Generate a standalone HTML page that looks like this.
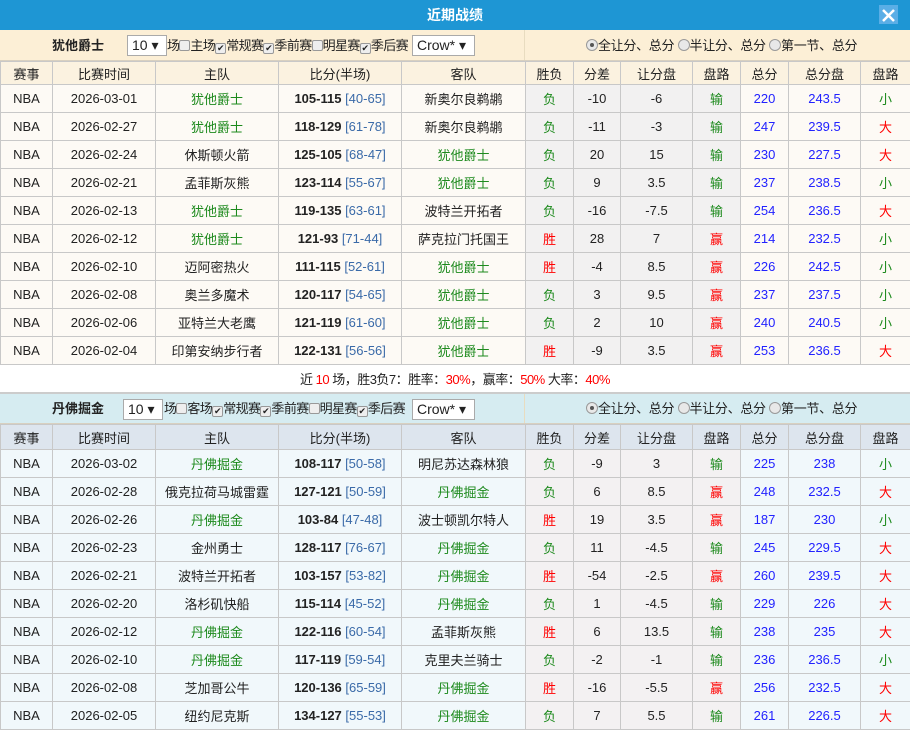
<!DOCTYPE html>
<html><head><meta charset="utf-8"><style>
*{margin:0;padding:0;box-sizing:border-box}
body{width:910px;height:728px;overflow:hidden;background:#fff;font-family:"Liberation Sans","Noto Sans CJK SC",sans-serif;font-size:13px;color:#222}
.title{height:30px;background:#1e96d4;color:#fff;font-weight:bold;font-size:14px;text-align:center;line-height:30px;position:relative}
.close{position:absolute;right:12px;top:5px;width:19px;height:19px;background:#5aaee6}
.bar{height:31px;position:relative;border-bottom:1px solid #d8d0c0;font-size:13px}
.bar .l{position:absolute;left:0;top:0;width:525px;height:100%;border-right:1px solid #e8dcc0}
.bar .team{position:absolute;left:52px;top:0;line-height:31px;font-weight:bold}
.bar .sel{position:absolute;top:5px;height:21px;border:1px solid #aaa;background:#fff;line-height:19px;padding-left:4px;font-size:14px}
.bar .opts{position:absolute;left:167px;top:0;line-height:31px;white-space:nowrap;letter-spacing:-0.6px}
.cb{display:inline-block;width:11px;height:11px;border:1px solid #999;border-radius:2px;background:#eee;vertical-align:-1px;font-size:9px;line-height:9px;text-align:center;letter-spacing:0}
.rd{display:inline-block;width:12px;height:12px;border:1px solid #999;border-radius:50%;background:#e8e8e8;vertical-align:-1px;position:relative}
.rd.on::after{content:"";position:absolute;left:3px;top:3px;width:4px;height:4px;border-radius:50%;background:#555}
.bar .r{position:absolute;left:586px;top:0;line-height:31px;white-space:nowrap;letter-spacing:-0.3px}
table{border-collapse:collapse;table-layout:fixed;width:910px}
td{border:1px solid #c8c8c8;text-align:center;height:28px;white-space:nowrap;overflow:hidden}
tr.h td{height:23px}
.t1 tr.h td{background:#fbf2e0}
.t1 td{background:#fdfaf5}
.t1 td.g{background:#f2f1f1}
.t2 tr.h td{background:#dde5ee;height:25px}
.t2 td{background:#f1f8fb}
.t2 td.g{background:#f3f1f2}
.gr{color:#1d8a1d}.rd2{color:#f00}.bl{color:#22f}.hb{color:#3a6aa8}
b{font-weight:bold}
.sum{height:29px;line-height:29px;text-align:left;padding-left:300px;border-bottom:2px solid #ccc;font-size:13px;letter-spacing:-0.5px}
.sum span{color:#f00}
</style></head><body>
<div class="title">近期战绩<div class="close"><svg width="19" height="19"><path d="M4 4L15 15M15 4L4 15" stroke="#fff" stroke-width="2.5"/></svg></div></div>
<div class="bar" style="background:#fcefd6">
<div class="l"><span class="team">犹他爵士</span><span class="sel" style="left:127px;width:40px">10 ▾</span>
<span class="opts" style="left:167px">场<span class="cb"></span>主场<span class="cb">✔</span>常规赛<span class="cb">✔</span>季前赛<span class="cb"></span>明星赛<span class="cb">✔</span>季后赛</span>
<span class="sel" style="left:412px;width:63px">Crow* ▾</span></div>
<span class="r"><span class="rd on"></span>全让分、总分 <span class="rd"></span>半让分、总分 <span class="rd"></span>第一节、总分</span></div>
<table class="t1"><colgroup><col style="width:52px"><col style="width:103px"><col style="width:123px"><col style="width:123px"><col style="width:124px"><col style="width:48px"><col style="width:47px"><col style="width:72px"><col style="width:48px"><col style="width:48px"><col style="width:72px"><col style="width:50px"></colgroup>
<tr class="h"><td>赛事</td><td>比赛时间</td><td>主队</td><td>比分(半场)</td><td>客队</td><td>胜负</td><td>分差</td><td>让分盘</td><td>盘路</td><td>总分</td><td>总分盘</td><td>盘路</td></tr>
<tr><td>NBA</td><td>2026-03-01</td><td class="gr">犹他爵士</td><td><b>105-115</b> <span class="hb">[40-65]</span></td><td>新奥尔良鹈鹕</td><td class="g gr">负</td><td class="g">-10</td><td class="g">-6</td><td class="g gr">输</td><td class="bl">220</td><td class="bl">243.5</td><td class="gr">小</td></tr>
<tr><td>NBA</td><td>2026-02-27</td><td class="gr">犹他爵士</td><td><b>118-129</b> <span class="hb">[61-78]</span></td><td>新奥尔良鹈鹕</td><td class="g gr">负</td><td class="g">-11</td><td class="g">-3</td><td class="g gr">输</td><td class="bl">247</td><td class="bl">239.5</td><td class="rd2">大</td></tr>
<tr><td>NBA</td><td>2026-02-24</td><td>休斯顿火箭</td><td><b>125-105</b> <span class="hb">[68-47]</span></td><td class="gr">犹他爵士</td><td class="g gr">负</td><td class="g">20</td><td class="g">15</td><td class="g gr">输</td><td class="bl">230</td><td class="bl">227.5</td><td class="rd2">大</td></tr>
<tr><td>NBA</td><td>2026-02-21</td><td>孟菲斯灰熊</td><td><b>123-114</b> <span class="hb">[55-67]</span></td><td class="gr">犹他爵士</td><td class="g gr">负</td><td class="g">9</td><td class="g">3.5</td><td class="g gr">输</td><td class="bl">237</td><td class="bl">238.5</td><td class="gr">小</td></tr>
<tr><td>NBA</td><td>2026-02-13</td><td class="gr">犹他爵士</td><td><b>119-135</b> <span class="hb">[63-61]</span></td><td>波特兰开拓者</td><td class="g gr">负</td><td class="g">-16</td><td class="g">-7.5</td><td class="g gr">输</td><td class="bl">254</td><td class="bl">236.5</td><td class="rd2">大</td></tr>
<tr><td>NBA</td><td>2026-02-12</td><td class="gr">犹他爵士</td><td><b>121-93</b> <span class="hb">[71-44]</span></td><td>萨克拉门托国王</td><td class="g rd2">胜</td><td class="g">28</td><td class="g">7</td><td class="g rd2">赢</td><td class="bl">214</td><td class="bl">232.5</td><td class="gr">小</td></tr>
<tr><td>NBA</td><td>2026-02-10</td><td>迈阿密热火</td><td><b>111-115</b> <span class="hb">[52-61]</span></td><td class="gr">犹他爵士</td><td class="g rd2">胜</td><td class="g">-4</td><td class="g">8.5</td><td class="g rd2">赢</td><td class="bl">226</td><td class="bl">242.5</td><td class="gr">小</td></tr>
<tr><td>NBA</td><td>2026-02-08</td><td>奥兰多魔术</td><td><b>120-117</b> <span class="hb">[54-65]</span></td><td class="gr">犹他爵士</td><td class="g gr">负</td><td class="g">3</td><td class="g">9.5</td><td class="g rd2">赢</td><td class="bl">237</td><td class="bl">237.5</td><td class="gr">小</td></tr>
<tr><td>NBA</td><td>2026-02-06</td><td>亚特兰大老鹰</td><td><b>121-119</b> <span class="hb">[61-60]</span></td><td class="gr">犹他爵士</td><td class="g gr">负</td><td class="g">2</td><td class="g">10</td><td class="g rd2">赢</td><td class="bl">240</td><td class="bl">240.5</td><td class="gr">小</td></tr>
<tr><td>NBA</td><td>2026-02-04</td><td>印第安纳步行者</td><td><b>122-131</b> <span class="hb">[56-56]</span></td><td class="gr">犹他爵士</td><td class="g rd2">胜</td><td class="g">-9</td><td class="g">3.5</td><td class="g rd2">赢</td><td class="bl">253</td><td class="bl">236.5</td><td class="rd2">大</td></tr>
</table>
<div class="sum">近 <span>10</span> 场，胜3负7：胜率：<span>30%</span>，赢率：<span>50%</span> 大率：<span>40%</span></div>
<div class="bar" style="background:#d6ecf1;height:30px">
<div class="l"><span class="team" style="line-height:30px">丹佛掘金</span><span class="sel" style="left:123px;width:40px">10 ▾</span>
<span class="opts" style="left:164px;line-height:30px">场<span class="cb"></span>客场<span class="cb">✔</span>常规赛<span class="cb">✔</span>季前赛<span class="cb"></span>明星赛<span class="cb">✔</span>季后赛</span>
<span class="sel" style="left:412px;width:63px">Crow* ▾</span></div>
<span class="r" style="line-height:30px"><span class="rd on"></span>全让分、总分 <span class="rd"></span>半让分、总分 <span class="rd"></span>第一节、总分</span></div>
<table class="t2"><colgroup><col style="width:52px"><col style="width:103px"><col style="width:123px"><col style="width:123px"><col style="width:124px"><col style="width:48px"><col style="width:47px"><col style="width:72px"><col style="width:48px"><col style="width:48px"><col style="width:72px"><col style="width:50px"></colgroup>
<tr class="h"><td>赛事</td><td>比赛时间</td><td>主队</td><td>比分(半场)</td><td>客队</td><td>胜负</td><td>分差</td><td>让分盘</td><td>盘路</td><td>总分</td><td>总分盘</td><td>盘路</td></tr>
<tr><td>NBA</td><td>2026-03-02</td><td class="gr">丹佛掘金</td><td><b>108-117</b> <span class="hb">[50-58]</span></td><td>明尼苏达森林狼</td><td class="g gr">负</td><td class="g">-9</td><td class="g">3</td><td class="g gr">输</td><td class="bl">225</td><td class="bl">238</td><td class="gr">小</td></tr>
<tr><td>NBA</td><td>2026-02-28</td><td>俄克拉荷马城雷霆</td><td><b>127-121</b> <span class="hb">[50-59]</span></td><td class="gr">丹佛掘金</td><td class="g gr">负</td><td class="g">6</td><td class="g">8.5</td><td class="g rd2">赢</td><td class="bl">248</td><td class="bl">232.5</td><td class="rd2">大</td></tr>
<tr><td>NBA</td><td>2026-02-26</td><td class="gr">丹佛掘金</td><td><b>103-84</b> <span class="hb">[47-48]</span></td><td>波士顿凯尔特人</td><td class="g rd2">胜</td><td class="g">19</td><td class="g">3.5</td><td class="g rd2">赢</td><td class="bl">187</td><td class="bl">230</td><td class="gr">小</td></tr>
<tr><td>NBA</td><td>2026-02-23</td><td>金州勇士</td><td><b>128-117</b> <span class="hb">[76-67]</span></td><td class="gr">丹佛掘金</td><td class="g gr">负</td><td class="g">11</td><td class="g">-4.5</td><td class="g gr">输</td><td class="bl">245</td><td class="bl">229.5</td><td class="rd2">大</td></tr>
<tr><td>NBA</td><td>2026-02-21</td><td>波特兰开拓者</td><td><b>103-157</b> <span class="hb">[53-82]</span></td><td class="gr">丹佛掘金</td><td class="g rd2">胜</td><td class="g">-54</td><td class="g">-2.5</td><td class="g rd2">赢</td><td class="bl">260</td><td class="bl">239.5</td><td class="rd2">大</td></tr>
<tr><td>NBA</td><td>2026-02-20</td><td>洛杉矶快船</td><td><b>115-114</b> <span class="hb">[45-52]</span></td><td class="gr">丹佛掘金</td><td class="g gr">负</td><td class="g">1</td><td class="g">-4.5</td><td class="g gr">输</td><td class="bl">229</td><td class="bl">226</td><td class="rd2">大</td></tr>
<tr><td>NBA</td><td>2026-02-12</td><td class="gr">丹佛掘金</td><td><b>122-116</b> <span class="hb">[60-54]</span></td><td>孟菲斯灰熊</td><td class="g rd2">胜</td><td class="g">6</td><td class="g">13.5</td><td class="g gr">输</td><td class="bl">238</td><td class="bl">235</td><td class="rd2">大</td></tr>
<tr><td>NBA</td><td>2026-02-10</td><td class="gr">丹佛掘金</td><td><b>117-119</b> <span class="hb">[59-54]</span></td><td>克里夫兰骑士</td><td class="g gr">负</td><td class="g">-2</td><td class="g">-1</td><td class="g gr">输</td><td class="bl">236</td><td class="bl">236.5</td><td class="gr">小</td></tr>
<tr><td>NBA</td><td>2026-02-08</td><td>芝加哥公牛</td><td><b>120-136</b> <span class="hb">[65-59]</span></td><td class="gr">丹佛掘金</td><td class="g rd2">胜</td><td class="g">-16</td><td class="g">-5.5</td><td class="g rd2">赢</td><td class="bl">256</td><td class="bl">232.5</td><td class="rd2">大</td></tr>
<tr><td>NBA</td><td>2026-02-05</td><td>纽约尼克斯</td><td><b>134-127</b> <span class="hb">[55-53]</span></td><td class="gr">丹佛掘金</td><td class="g gr">负</td><td class="g">7</td><td class="g">5.5</td><td class="g gr">输</td><td class="bl">261</td><td class="bl">226.5</td><td class="rd2">大</td></tr>
</table>
</body></html>
